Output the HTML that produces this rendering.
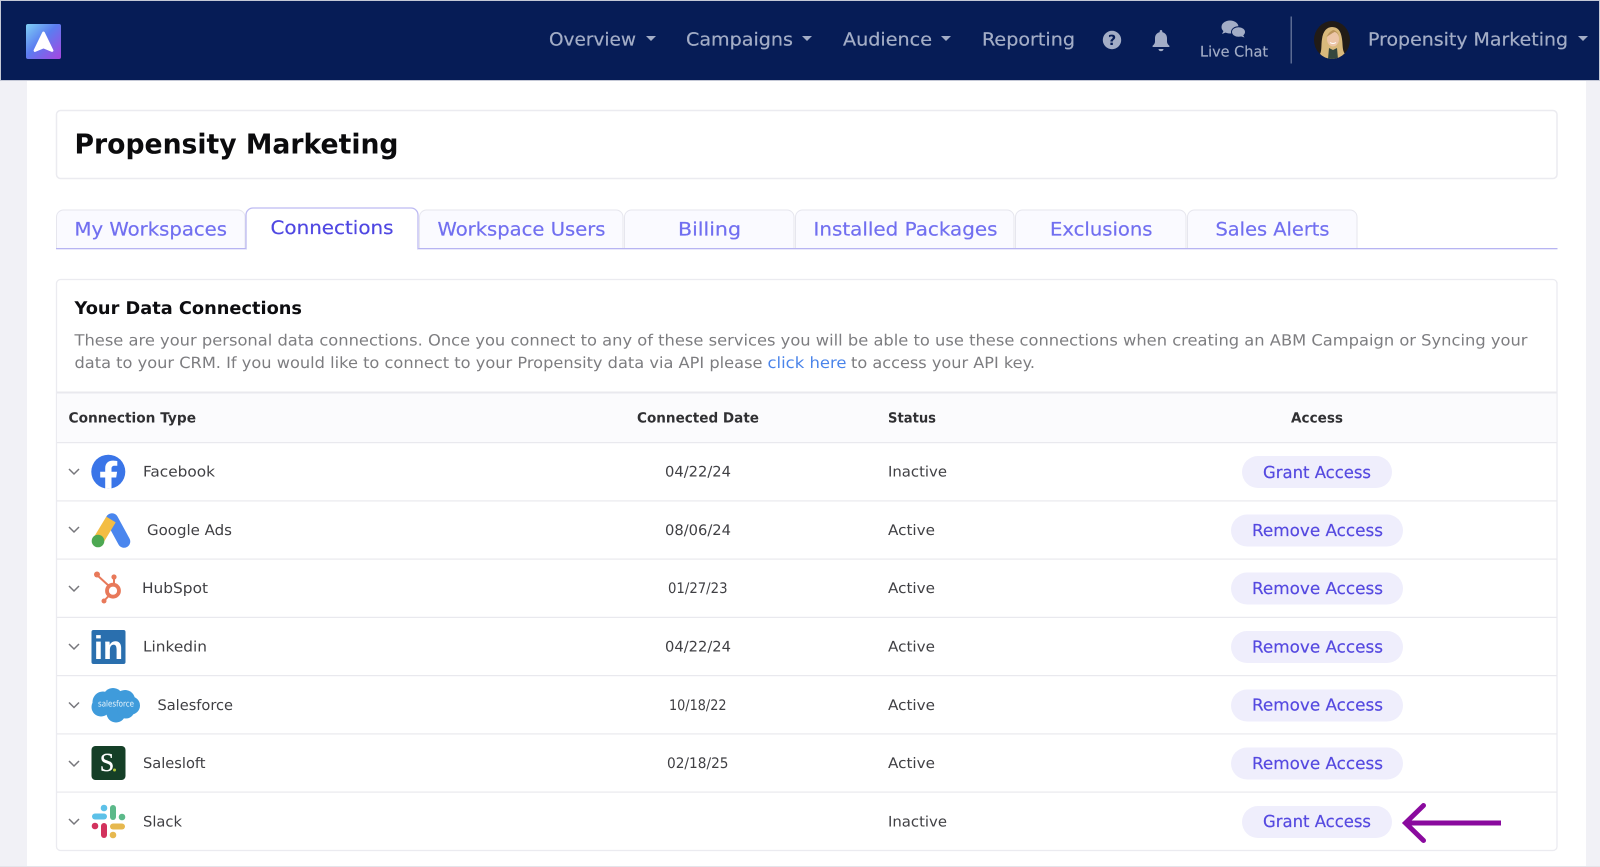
<!DOCTYPE html>
<html lang="en">
<head>
<meta charset="utf-8">
<title>Propensity Marketing - Connections</title>
<style>
html,body{margin:0;padding:0;width:1600px;height:867px;overflow:hidden;background:#fff}
svg{display:block}
text{font-family:"DejaVu Sans","Liberation Sans",sans-serif;text-rendering:geometricPrecision}
.nav{font-size:18px;fill:#a3adc6;stroke:#a3adc6;stroke-width:.2px}
.tab{font-size:18.5px;fill:#716ff0;stroke:#716ff0;stroke-width:.2px}
.para{font-size:15.5px;fill:#7d7d80}
.th{font-size:14px;font-weight:bold;fill:#303033}
.td{font-size:14.5px;fill:#404044}
.btn{font-size:16.5px;fill:#5549e0;stroke:#5549e0;stroke-width:.2px}
</style>
</head>
<body>
<svg xmlns="http://www.w3.org/2000/svg" width="1600" height="867" viewBox="0 0 1600 867">
<defs>
<linearGradient id="lg" x1="0" y1="0" x2="1" y2="1">
<stop offset="0" stop-color="#7fd0f5"/><stop offset=".45" stop-color="#5b7df0"/><stop offset="1" stop-color="#a845e0"/>
</linearGradient>
<clipPath id="av"><ellipse cx="1332" cy="40" rx="18" ry="19"/></clipPath>
</defs>

<!-- page background -->
<rect width="1600" height="867" fill="#f1f1f6"/>
<rect x="27" y="80" width="1559" height="786" fill="#fff"/>
<rect x="0" y="866" width="1600" height="1" fill="#e4e4ea"/>

<!-- header -->
<rect x="0" y="0" width="1600" height="81" fill="#c4c8d6"/>
<rect x="1" y="1" width="1598" height="79" fill="#061c56"/>
<rect x="26" y="24" width="35" height="35" rx="2" fill="url(#lg)"/>
<path d="M43.500 33 L52 50.500 L43.500 47 L35 50.500 Z" fill="#fff" stroke="#fff" stroke-width="2.800" stroke-linejoin="round"/>

<text class="nav" x="549" y="45.500" textLength="87" lengthAdjust="spacingAndGlyphs">Overview</text>
<path d="M646 36h10l-5 5z" fill="#a3adc6"/>
<text class="nav" x="686" y="45.500" textLength="107" lengthAdjust="spacingAndGlyphs">Campaigns</text>
<path d="M802 36h10l-5 5z" fill="#a3adc6"/>
<text class="nav" x="843" y="45.500" textLength="89" lengthAdjust="spacingAndGlyphs">Audience</text>
<path d="M941 36h10l-5 5z" fill="#a3adc6"/>
<text class="nav" x="982" y="45.500" textLength="93" lengthAdjust="spacingAndGlyphs">Reporting</text>

<circle cx="1112" cy="40" r="9.200" fill="#a3adc6"/>
<text x="1112" y="45" text-anchor="middle" font-size="14" font-weight="bold" fill="#061c56">?</text>
<path d="M1161 30c-.8 0-1.300.6-1.300 1.300v.8c-3 .7-4.700 3.200-4.700 6v3.400c0 1.800-1 3-2.400 4.300v1.200h16.800v-1.200c-1.400-1.300-2.400-2.500-2.400-4.300v-3.400c0-2.800-1.700-5.300-4.700-6v-.8c0-.7-.5-1.300-1.300-1.300zM1158.500 49c0 1.300 1.100 2.200 2.500 2.200s2.500-.9 2.500-2.200z" fill="#a3adc6"/>
<ellipse cx="1230" cy="27" rx="8.500" ry="6.500" fill="#a3adc6"/>
<path d="M1224 30l-2 4 5-2z" fill="#a3adc6"/>
<ellipse cx="1238.500" cy="32" rx="7" ry="5.300" fill="#a3adc6" stroke="#061c56" stroke-width="1"/>
<path d="M1243 35l1.500 2.500-4.500-1.500z" fill="#a3adc6"/>
<text x="1200" y="56.500" font-size="14.500" fill="#a3adc6" stroke="#a3adc6" stroke-width=".15" textLength="68" lengthAdjust="spacingAndGlyphs">Live Chat</text>
<rect x="1290.500" y="16.500" width="1.500" height="47" fill="#5a6a92"/>

<!-- avatar -->
<g clip-path="url(#av)">
<rect x="1314" y="21" width="36" height="38" fill="#211b17"/>
<path d="M1320 54c2-4 1-9 2-15c1-8 5-12 10-12c6 0 9 4 10 12c1 6 0 11 3 15l-6 5h-14z" fill="#d9b97c"/>
<ellipse cx="1333" cy="39" rx="6" ry="7.500" fill="#ecc5a8"/>
<path d="M1326.500 37c2-4 4-6 7-7c3 1 5 3 6 7c-1-3-3-5-5-5c-2 1-5 3-8 5z" fill="#b9935a"/>
<path d="M1328 59l1-11 4 2 4-2 1 11z" fill="#34473f"/>
<path d="M1330 42.500q3 2 6 0" stroke="#fff" stroke-width="1" fill="none"/>
</g>

<text class="nav" x="1368" y="45.500" textLength="200" lengthAdjust="spacingAndGlyphs">Propensity Marketing</text>
<path d="M1578 36h10l-5 5z" fill="#a3adc6"/>

<!-- title card -->
<rect x="56.500" y="110.500" width="1500.500" height="68" rx="4" fill="#fff" stroke="#ebebf0" stroke-width="1.500"/>
<text x="74.500" y="153.500" font-size="27.500" font-weight="bold" fill="#0b0b0d" textLength="324" lengthAdjust="spacingAndGlyphs">Propensity Marketing</text>

<!-- tabs -->
<g fill="#fafaff" stroke="#e6e6ee" stroke-width="1">
<path d="M56.500 248V217a7 7 0 0 1 7-7H238a7 7 0 0 1 7 7V248"/>
<path d="M419.500 248V217a7 7 0 0 1 7-7H616a7 7 0 0 1 7 7V248"/>
<path d="M624.500 248V217a7 7 0 0 1 7-7H787a7 7 0 0 1 7 7V248"/>
<path d="M795.500 248V217a7 7 0 0 1 7-7H1007a7 7 0 0 1 7 7V248"/>
<path d="M1015.500 248V217a7 7 0 0 1 7-7H1179a7 7 0 0 1 7 7V248"/>
<path d="M1187.500 248V217a7 7 0 0 1 7-7H1350a7 7 0 0 1 7 7V248"/>
</g>
<rect x="56" y="248" width="1501.500" height="1.300" fill="#b7b4f2"/>
<path d="M246 249V215a7 7 0 0 1 7-7H411a7 7 0 0 1 7 7V249" fill="#fff" stroke="#bdbaf2" stroke-width="1.300"/>
<rect x="247" y="247" width="170" height="3" fill="#fff"/>

<text class="tab" x="74.500" y="235.500" textLength="152.500" lengthAdjust="spacingAndGlyphs">My Workspaces</text>
<text class="tab" x="270.500" y="234" textLength="123" lengthAdjust="spacingAndGlyphs" style="fill:#4f47e2;stroke:#4f47e2">Connections</text>
<text class="tab" x="437.500" y="235.500" textLength="168" lengthAdjust="spacingAndGlyphs">Workspace Users</text>
<text class="tab" x="678" y="235.500" textLength="63" lengthAdjust="spacingAndGlyphs">Billing</text>
<text class="tab" x="813.500" y="235.500" textLength="184" lengthAdjust="spacingAndGlyphs">Installed Packages</text>
<text class="tab" x="1050" y="235.500" textLength="102.500" lengthAdjust="spacingAndGlyphs">Exclusions</text>
<text class="tab" x="1215.500" y="235.500" textLength="114" lengthAdjust="spacingAndGlyphs">Sales Alerts</text>

<!-- data connections card -->
<rect x="56.500" y="279.500" width="1500.500" height="571" rx="4" fill="#fff" stroke="#ebebf0" stroke-width="1.300"/>
<text x="74.500" y="314" font-size="17.500" font-weight="bold" fill="#0d0d10" textLength="227.500" lengthAdjust="spacingAndGlyphs">Your Data Connections</text>
<text class="para" x="74.500" y="345.500" textLength="1453" lengthAdjust="spacingAndGlyphs">These are your personal data connections. Once you connect to any of these services you will be able to use these connections when creating an ABM Campaign or Syncing your</text>
<text class="para" x="74.500" y="368" textLength="688" lengthAdjust="spacingAndGlyphs">data to your CRM. If you would like to connect to your Propensity data via API please</text>
<text class="para" x="767.500" y="368" textLength="79" lengthAdjust="spacingAndGlyphs" style="fill:#4a84ea">click here</text>
<text class="para" x="851" y="368" textLength="184" lengthAdjust="spacingAndGlyphs">to access your API key.</text>

<rect x="57" y="393" width="1499.500" height="49.500" fill="#fbfbfd"/>
<rect x="57" y="391.500" width="1499.500" height="2" fill="#e9e9ee"/>
<text class="th" x="68.500" y="422.500" textLength="127.500" lengthAdjust="spacingAndGlyphs">Connection Type</text>
<text class="th" x="637" y="422.500" textLength="122" lengthAdjust="spacingAndGlyphs">Connected Date</text>
<text class="th" x="888" y="422.500" textLength="48" lengthAdjust="spacingAndGlyphs">Status</text>
<text class="th" x="1291" y="422.500" textLength="52" lengthAdjust="spacingAndGlyphs">Access</text>

<!-- row separators -->
<g fill="#e9e9ee">
<rect x="57" y="442" width="1499.500" height="1.200"/>
<rect x="57" y="500.300" width="1499.500" height="1.200"/>
<rect x="57" y="558.500" width="1499.500" height="1.200"/>
<rect x="57" y="616.800" width="1499.500" height="1.200"/>
<rect x="57" y="675" width="1499.500" height="1.200"/>
<rect x="57" y="733.300" width="1499.500" height="1.200"/>
<rect x="57" y="791.500" width="1499.500" height="1.200"/>
</g>

<!-- chevrons -->
<g fill="none" stroke="#77777c" stroke-width="1.500">
<path d="M69 469l5 5 5-5"/>
<path d="M69 527l5 5 5-5"/>
<path d="M69 586l5 5 5-5"/>
<path d="M69 644l5 5 5-5"/>
<path d="M69 702.500l5 5 5-5"/>
<path d="M69 761l5 5 5-5"/>
<path d="M69 819l5 5 5-5"/>
</g>

<!-- facebook -->
<circle cx="108.300" cy="471.700" r="17" fill="#3a75e8"/>
<path d="M111.500 488.700V477.500h4.700l.9-5.700h-5.600v-3.100c0-1.600.8-2.900 3-2.900h2.800v-4.800s-2.300-.4-4.500-.4c-4.600 0-7.600 2.700-7.600 7.700v3.500h-5v5.700h5v11.200z" fill="#fff"/>

<!-- google ads -->
<path d="M112 519.500 L124 541.500" stroke="#4a86ee" stroke-width="12.500" stroke-linecap="round" fill="none"/>
<path d="M111 519.500 L98 541" stroke="#f3bd43" stroke-width="11" fill="none"/>
<circle cx="98" cy="541" r="6.300" fill="#4da852"/>

<!-- hubspot -->
<g stroke="#e8795a" fill="none">
<circle cx="113" cy="590.700" r="6" stroke-width="3.800"/>
<path d="M114 577V585" stroke-width="2"/>
<path d="M97 575 L109 586" stroke-width="2"/>
<path d="M104 601 L109 595.500" stroke-width="2"/>
</g>
<g fill="#e8795a">
<circle cx="114" cy="577" r="2.600"/>
<circle cx="97" cy="574.500" r="3"/>
<circle cx="104" cy="601" r="2.500"/>
</g>

<!-- linkedin -->
<rect x="91.500" y="630" width="34" height="34" rx="2" fill="#2a6fae"/>
<text x="108.500" y="659" text-anchor="middle" font-size="33" font-weight="bold" style='font-family:"Liberation Sans",sans-serif' fill="#fff">in</text>

<!-- salesforce -->
<g fill="#3f9bdb">
<circle cx="103" cy="702" r="10.500"/>
<circle cx="113" cy="698" r="10"/>
<circle cx="125" cy="700" r="10"/>
<circle cx="131" cy="705.500" r="9"/>
<circle cx="116" cy="713" r="9.500"/>
<circle cx="101" cy="707" r="9.500"/>
<circle cx="126" cy="710" r="8.500"/>
</g>
<text x="116" y="706.500" text-anchor="middle" font-size="8.500" fill="#e9f4fb" textLength="36" lengthAdjust="spacingAndGlyphs">salesforce</text>

<!-- salesloft -->
<rect x="91.500" y="746" width="34" height="34" rx="4" fill="#153f27"/>
<text x="107" y="771" text-anchor="middle" font-size="26" style='font-family:"Liberation Serif",serif' fill="#fff" stroke="#fff" stroke-width=".3">S</text>
<circle cx="114.500" cy="770" r="1.500" fill="#b4c93a"/>

<!-- slack -->
<g stroke-linecap="round" fill="none" stroke-width="6">
<path d="M95 816.500H104" stroke="#5dc1e8"/>
<path d="M113 808V817" stroke="#5cb98a"/>
<path d="M113 826.500H122" stroke="#e6b84f"/>
<path d="M104 826V835" stroke="#d2325d"/>
</g>
<g>
<circle cx="104" cy="808" r="3.300" fill="#5dc1e8"/>
<circle cx="122" cy="817" r="3.300" fill="#5cb98a"/>
<circle cx="113" cy="835" r="3.300" fill="#e6b84f"/>
<circle cx="95" cy="826" r="3.300" fill="#d2325d"/>
</g>

<!-- row names -->
<text class="td" x="143" y="476.500" textLength="72" lengthAdjust="spacingAndGlyphs">Facebook</text>
<text class="td" x="147" y="535" textLength="85" lengthAdjust="spacingAndGlyphs">Google Ads</text>
<text class="td" x="142" y="593" textLength="66" lengthAdjust="spacingAndGlyphs">HubSpot</text>
<text class="td" x="143" y="651.500" textLength="64" lengthAdjust="spacingAndGlyphs">Linkedin</text>
<text class="td" x="157.500" y="710" textLength="75.500" lengthAdjust="spacingAndGlyphs">Salesforce</text>
<text class="td" x="143" y="768" textLength="62.500" lengthAdjust="spacingAndGlyphs">Salesloft</text>
<text class="td" x="143" y="826.500" textLength="39" lengthAdjust="spacingAndGlyphs">Slack</text>

<!-- dates -->
<text class="td" x="665" y="476.500" textLength="66" lengthAdjust="spacingAndGlyphs">04/22/24</text>
<text class="td" x="665" y="535" textLength="66" lengthAdjust="spacingAndGlyphs">08/06/24</text>
<text class="td" x="668" y="593" textLength="59.500" lengthAdjust="spacingAndGlyphs">01/27/23</text>
<text class="td" x="665" y="651.500" textLength="66" lengthAdjust="spacingAndGlyphs">04/22/24</text>
<text class="td" x="669" y="710" textLength="57.500" lengthAdjust="spacingAndGlyphs">10/18/22</text>
<text class="td" x="667" y="768" textLength="61.500" lengthAdjust="spacingAndGlyphs">02/18/25</text>

<!-- status -->
<text class="td" x="888" y="476.500" textLength="59" lengthAdjust="spacingAndGlyphs">Inactive</text>
<text class="td" x="888" y="535" textLength="47" lengthAdjust="spacingAndGlyphs">Active</text>
<text class="td" x="888" y="593" textLength="47" lengthAdjust="spacingAndGlyphs">Active</text>
<text class="td" x="888" y="651.500" textLength="47" lengthAdjust="spacingAndGlyphs">Active</text>
<text class="td" x="888" y="710" textLength="47" lengthAdjust="spacingAndGlyphs">Active</text>
<text class="td" x="888" y="768" textLength="47" lengthAdjust="spacingAndGlyphs">Active</text>
<text class="td" x="888" y="826.500" textLength="59" lengthAdjust="spacingAndGlyphs">Inactive</text>

<!-- buttons -->
<g fill="#efeefc">
<rect x="1242" y="456" width="150" height="32" rx="16"/>
<rect x="1231" y="514.500" width="172" height="32" rx="16"/>
<rect x="1231" y="572.500" width="172" height="32" rx="16"/>
<rect x="1231" y="631" width="172" height="32" rx="16"/>
<rect x="1231" y="689.500" width="172" height="32" rx="16"/>
<rect x="1231" y="747.500" width="172" height="32" rx="16"/>
<rect x="1242" y="806" width="150" height="32" rx="16"/>
</g>
<text class="btn" x="1263" y="478" textLength="108" lengthAdjust="spacingAndGlyphs">Grant Access</text>
<text class="btn" x="1252" y="536" textLength="131" lengthAdjust="spacingAndGlyphs">Remove Access</text>
<text class="btn" x="1252" y="594" textLength="131" lengthAdjust="spacingAndGlyphs">Remove Access</text>
<text class="btn" x="1252" y="652.500" textLength="131" lengthAdjust="spacingAndGlyphs">Remove Access</text>
<text class="btn" x="1252" y="710.500" textLength="131" lengthAdjust="spacingAndGlyphs">Remove Access</text>
<text class="btn" x="1252" y="769" textLength="131" lengthAdjust="spacingAndGlyphs">Remove Access</text>
<text class="btn" x="1263" y="827" textLength="108" lengthAdjust="spacingAndGlyphs">Grant Access</text>

<!-- arrow -->
<path d="M1501 823H1407" fill="none" stroke="#8a0a9e" stroke-width="5"/>
<path d="M1423.500 805.500L1405.500 823L1423.500 840.500" fill="none" stroke="#8a0a9e" stroke-width="5" stroke-linecap="round"/>
</svg>
</body>
</html>
